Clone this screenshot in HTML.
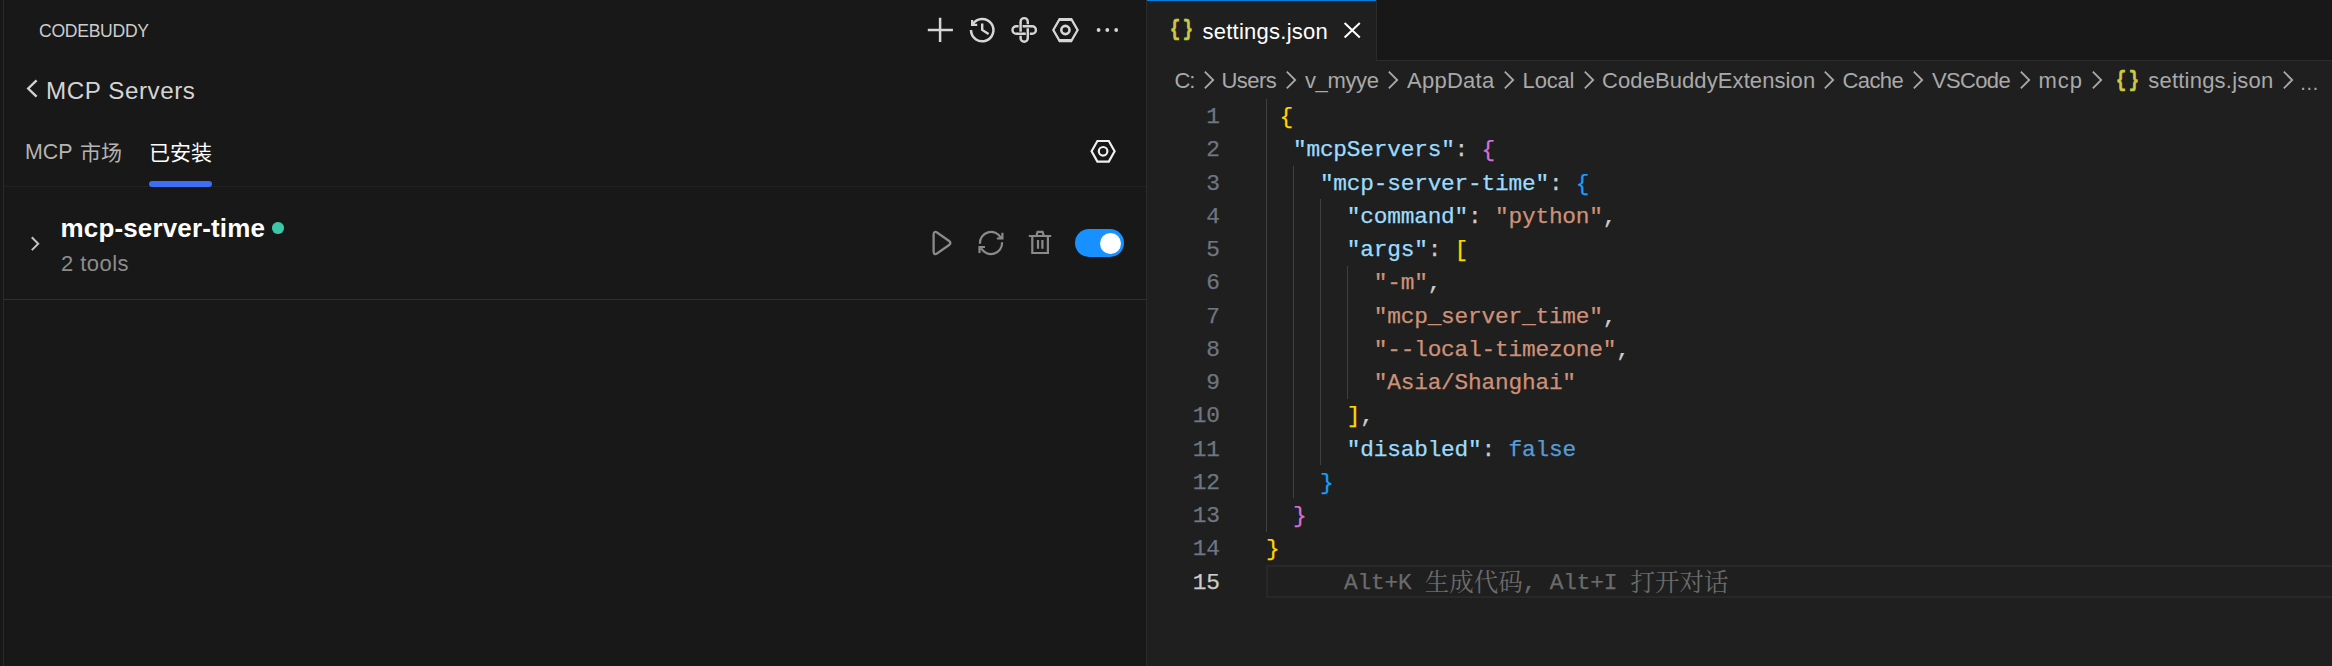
<!DOCTYPE html>
<html lang="zh-CN">
<head>
<meta charset="utf-8">
<title>CodeBuddy MCP Servers - settings.json</title>
<style>
html,body{margin:0;padding:0;background:#181818;}
body{width:2332px;height:666px;position:relative;overflow:hidden;font-family:"Liberation Sans","Noto Sans CJK SC",sans-serif;color:#cccccc;}
.abs{position:absolute;}
.t{position:absolute;white-space:pre;line-height:1;margin:0;padding:0;}
svg{position:absolute;overflow:visible;}
/* ---------- side panel ---------- */
#side{position:absolute;left:0;top:0;width:1146px;height:666px;background:#181818;}
#side .vline{position:absolute;left:3px;top:0;width:1px;height:666px;background:#2b2b2b;}
#side .h1{position:absolute;left:4px;top:186px;width:1142px;height:1px;background:#212121;}
#side .h2{position:absolute;left:4px;top:299px;width:1142px;height:1px;background:#303030;}
#divider{position:absolute;left:1146px;top:0;width:1px;height:666px;background:#2b2b2b;}
.sans{font-family:"Liberation Sans","Noto Sans CJK SC",sans-serif;}
/* ---------- editor ---------- */
#editor{position:absolute;left:1147px;top:0;width:1185px;height:666px;background:#1f1f1f;}
#tabbar{position:absolute;left:0;top:0;width:1185px;height:60px;background:#181818;border-bottom:1px solid #2b2b2b;}
#tab{position:absolute;left:0;top:0;width:229px;height:61px;background:#1f1f1f;border-right:1px solid #2b2b2b;}
#tab .top{position:absolute;left:0;top:0;width:229px;height:1px;background:#0080e0;}
.mono{font-family:"Liberation Mono","Noto Serif CJK SC",monospace;}
#code{position:absolute;left:0;top:0;}
.ln{position:absolute;left:0;width:1219.7px;text-align:right;color:#6e7681;white-space:pre;}
.cl{position:absolute;left:1266px;white-space:pre;color:#cccccc;}
.k{color:#9cdcfe}.s{color:#ce9178}.b1{color:#ffd700}.b2{color:#da70d6}.b3{color:#179fff}.kw{color:#569cd6}
.ln,.cl{font-size:22.8px;letter-spacing:-0.21px;line-height:33.25px;height:33.25px;margin-top:1.8px;-webkit-text-stroke:0.25px currentColor;}
.ln.act{color:#cccccc;}
.ghost{color:#6b6b6b;}
.cj{font-family:"Noto Serif CJK SC",serif;font-size:24.5px;line-height:0;letter-spacing:0;-webkit-text-stroke:0;position:relative;top:2.4px;}
.guide{position:absolute;width:1px;background:#404040;}
</style>
</head>
<body>
<div id="side">
  <div class="vline"></div>
  <div class="h1"></div>
  <div class="h2"></div>

  <div class="t" id="t_title" style="left:39px;top:23px;font-size:17.6px;letter-spacing:-0.3px;color:#cccccc;">CODEBUDDY</div>
  <div class="t" id="t_mcp" style="left:46px;top:78.6px;font-size:24.2px;letter-spacing:0.55px;color:#d4d4d4;">MCP Servers</div>
  <div class="t" id="t_market" style="left:25px;top:141.9px;font-size:21px;color:#b4b4b4;"><span style="font-size:21.4px;line-height:0;position:relative;top:-1.2px;margin-right:2px;">MCP </span>市场</div>
  <div class="t" id="t_inst" style="left:149px;top:142px;font-size:21px;color:#ffffff;">已安装</div>
  <div class="abs" id="underline" style="left:149px;top:181px;width:63px;height:6px;border-radius:3px;background:#3c6ff5;"></div>
  <div class="t" id="t_name" style="left:60.5px;top:215px;font-size:26px;letter-spacing:0.15px;font-weight:bold;color:#ffffff;">mcp-server-time</div>
  <div class="abs" id="dot" style="left:272px;top:222px;width:11.5px;height:11.5px;border-radius:50%;background:#3cc8a8;"></div>
  <div class="t" id="t_tools" style="left:61px;top:253.1px;font-size:22px;letter-spacing:0.45px;color:#8c8c8c;">2 tools</div>

  <!-- header action icons -->
  <svg id="i_plus" style="left:926px;top:16px" width="28" height="28" viewBox="926 16 28 28"><path d="M927.8 30.1H952.9M940.1 17.8V42.1" stroke="#d6d6d6" stroke-width="2.5" fill="none"/></svg>
  <svg id="i_hist" style="left:968px;top:16px" width="28" height="28" viewBox="968 16 28 28"><path d="M972.91 23.84A11.2 11.2 0 1 1 971 30.1" stroke="#d6d6d6" stroke-width="2.5" fill="none"/><path d="M971 19.9H973.2V23.8H977.2V26H971Z" fill="#d6d6d6"/><path d="M971.5 20.5L976.8 25.6H971.5Z" fill="#d6d6d6" opacity="0.65"/><path d="M982.2 23.4V29.9L988.6 34" stroke="#d6d6d6" stroke-width="2.4" fill="none"/></svg>
  <svg id="i_knot" style="left:1010px;top:16px" width="28" height="28" viewBox="1010 16 28 28"><g fill="none" stroke-width="2.4" stroke="#d6d6d6"><rect x="1012.5" y="26.2" width="23.4" height="7.5" rx="3.75"/><rect x="1020.6" y="18.1" width="7.2" height="23.7" rx="3.6"/><path d="M1020.6 23.2V29.2M1027.8 30.7V36.7M1024.8 26.2H1030.8M1017.6 33.7H1023.6" stroke="#181818" stroke-width="4"/><path d="M1020.6 22.6V29.8M1027.8 30.1V37.3M1024.2 26.2H1031.4M1017 33.7H1024.2"/></g></svg>
  <svg id="i_hex" style="left:1051px;top:16px" width="29" height="28" viewBox="1051 16 29 28"><path d="M1053.3 30L1059.4 19.4H1071.5L1077.6 30L1071.5 40.6H1059.4Z" stroke="#d6d6d6" stroke-width="2.3" fill="none" stroke-linejoin="miter"/><path d="M1058.9 19.45H1072M1058.9 40.6H1072" stroke="#d6d6d6" stroke-width="3.1" fill="none"/><circle cx="1065.4" cy="30" r="4.1" stroke="#d6d6d6" stroke-width="2.6" fill="none"/></svg>
  <svg id="i_dots" style="left:1095px;top:26px" width="26" height="8" viewBox="1095 26 26 8"><circle cx="1098.6" cy="30" r="1.9" fill="#d6d6d6"/><circle cx="1107.3" cy="30" r="1.9" fill="#d6d6d6"/><circle cx="1116.2" cy="30" r="1.9" fill="#d6d6d6"/></svg>
  <!-- back chevron -->
  <svg id="i_back" style="left:24px;top:76px" width="16" height="24" viewBox="24 76 16 24"><path d="M36.6 80.3L28.2 88.5L36.6 96.7" stroke="#d0d0d0" stroke-width="2.4" fill="none"/></svg>
  <!-- settings hex (tabs row) -->
  <svg id="i_hex2" style="left:1089px;top:138px" width="29" height="28" viewBox="1089 138 29 28"><path d="M1091.6 151.3L1097.4 141H1108.8L1114.6 151.3L1108.8 161.6H1097.4Z" stroke="#f0f0f0" stroke-width="2.2" fill="none"/><circle cx="1103.1" cy="151.3" r="4.3" stroke="#f0f0f0" stroke-width="2.2" fill="none"/></svg>
  <!-- row chevron -->
  <svg id="i_chev" style="left:28px;top:234px" width="14" height="20" viewBox="28 234 14 20"><path d="M31.8 237.3L38.2 243.7L31.8 250.1" stroke="#c4c4c4" stroke-width="2" fill="none"/></svg>
  <!-- row action icons -->
  <svg id="i_play" style="left:930px;top:229px" width="24" height="28" viewBox="930 229 24 28"><path d="M933.6 235.1Q933.6 230.1 937.7 232.97L948.77 240.71Q952.05 243 948.77 245.29L937.7 253.03Q933.6 255.9 933.6 250.9Z" stroke="#8a8a8a" stroke-width="2.3" fill="none" stroke-linejoin="round"/></svg>
  <svg id="i_refresh" style="left:977px;top:229px" width="28" height="28" viewBox="977 229 28 28"><path d="M979.93 243.77A11.1 11.1 0 0 1 1000.80 237.79M1002.07 242.23A11.1 11.1 0 0 1 981.20 248.21M1002.4 232.8V238.5H996.9M979.5 252.9V247H985" stroke="#8a8a8a" stroke-width="2.2" fill="none"/></svg>
  <svg id="i_trash" style="left:1027px;top:228px" width="26" height="28" viewBox="1027 228 26 28"><path d="M1028.8 236H1051.2M1036.4 236L1037.6 231.8H1042.6L1043.8 236M1032.3 236V253H1047.9V236M1038 240V248.7M1042.4 240V248.7" stroke="#8a8a8a" stroke-width="2.2" fill="none"/></svg>
  <!-- toggle -->
  <div class="abs" id="toggle" style="left:1075px;top:229px;width:49.4px;height:28.2px;border-radius:14.1px;background:#1890ff;"></div>
  <div class="abs" id="knob" style="left:1099.9px;top:232.9px;width:21.2px;height:21.2px;border-radius:50%;background:#ffffff;"></div>
</div>
<div id="divider"></div>
<div id="editor">
  <div id="tabbar"></div>
  <div id="tab"><div class="top"></div></div>
</div>
<div id="overlay">
  <!-- tab -->
  <div class="t" id="tab_icon" style="left:1170.4px;top:17.6px;font-size:22.4px;font-weight:bold;letter-spacing:3.4px;color:#cbcb41;font-family:'Liberation Mono',monospace;-webkit-text-stroke:0.7px #cbcb41;transform:scaleX(0.76);transform-origin:0 0;">{}</div>
  <div class="t" id="tab_label" style="left:1202.5px;top:20.7px;font-size:22px;letter-spacing:0.25px;color:#ffffff;">settings.json</div>
  <svg id="tab_close" style="left:1342px;top:20px" width="20" height="20" viewBox="1342 20 20 20"><path d="M1344.6 23L1359.8 37.4M1359.8 23L1344.6 37.4" stroke="#ffffff" stroke-width="2" fill="none"/></svg>
  <!-- breadcrumbs -->
  <div class="t bc" id="bc0" style="left:1174.4px;top:70.4px;font-size:22px;color:#a9a9a9;letter-spacing:-1.10px;">C:</div>
  <div class="t bc" id="bc1" style="left:1221.4px;top:70.4px;font-size:22px;color:#a9a9a9;letter-spacing:-0.50px;">Users</div>
  <div class="t bc" id="bc2" style="left:1305.0px;top:70.4px;font-size:22px;color:#a9a9a9;letter-spacing:-0.38px;">v_myye</div>
  <div class="t bc" id="bc3" style="left:1407.0px;top:70.4px;font-size:22px;color:#a9a9a9;letter-spacing:0.25px;">AppData</div>
  <div class="t bc" id="bc4" style="left:1522.6px;top:70.4px;font-size:22px;color:#a9a9a9;letter-spacing:-0.20px;">Local</div>
  <div class="t bc" id="bc5" style="left:1602.0px;top:70.4px;font-size:22px;color:#a9a9a9;letter-spacing:0.09px;">CodeBuddyExtension</div>
  <div class="t bc" id="bc6" style="left:1842.6px;top:70.4px;font-size:22px;color:#a9a9a9;letter-spacing:-0.64px;">Cache</div>
  <div class="t bc" id="bc7" style="left:1932.0px;top:70.4px;font-size:22px;color:#a9a9a9;letter-spacing:-0.66px;">VSCode</div>
  <div class="t bc" id="bc8" style="left:2038.4px;top:70.4px;font-size:22px;color:#a9a9a9;letter-spacing:1.05px;">mcp</div>
  <div class="t bc" id="bc9" style="left:2148.2px;top:70.4px;font-size:22px;color:#a9a9a9;letter-spacing:0.23px;">settings.json</div>
  <svg id="bch0" style="left:1201.6px;top:70px" width="14" height="20" viewBox="-7 -10 14 20"><path d="M-4.2 -8.3L4.2 0L-4.2 8.3" stroke="#a9a9a9" stroke-width="1.8" fill="none"/></svg>
  <svg id="bch1" style="left:1284.0px;top:70px" width="14" height="20" viewBox="-7 -10 14 20"><path d="M-4.2 -8.3L4.2 0L-4.2 8.3" stroke="#a9a9a9" stroke-width="1.8" fill="none"/></svg>
  <svg id="bch2" style="left:1386.0px;top:70px" width="14" height="20" viewBox="-7 -10 14 20"><path d="M-4.2 -8.3L4.2 0L-4.2 8.3" stroke="#a9a9a9" stroke-width="1.8" fill="none"/></svg>
  <svg id="bch3" style="left:1502.0px;top:70px" width="14" height="20" viewBox="-7 -10 14 20"><path d="M-4.2 -8.3L4.2 0L-4.2 8.3" stroke="#a9a9a9" stroke-width="1.8" fill="none"/></svg>
  <svg id="bch4" style="left:1582.0px;top:70px" width="14" height="20" viewBox="-7 -10 14 20"><path d="M-4.2 -8.3L4.2 0L-4.2 8.3" stroke="#a9a9a9" stroke-width="1.8" fill="none"/></svg>
  <svg id="bch5" style="left:1822.0px;top:70px" width="14" height="20" viewBox="-7 -10 14 20"><path d="M-4.2 -8.3L4.2 0L-4.2 8.3" stroke="#a9a9a9" stroke-width="1.8" fill="none"/></svg>
  <svg id="bch6" style="left:1911.0px;top:70px" width="14" height="20" viewBox="-7 -10 14 20"><path d="M-4.2 -8.3L4.2 0L-4.2 8.3" stroke="#a9a9a9" stroke-width="1.8" fill="none"/></svg>
  <svg id="bch7" style="left:2018.0px;top:70px" width="14" height="20" viewBox="-7 -10 14 20"><path d="M-4.2 -8.3L4.2 0L-4.2 8.3" stroke="#a9a9a9" stroke-width="1.8" fill="none"/></svg>
  <svg id="bch8" style="left:2090.0px;top:70px" width="14" height="20" viewBox="-7 -10 14 20"><path d="M-4.2 -8.3L4.2 0L-4.2 8.3" stroke="#a9a9a9" stroke-width="1.8" fill="none"/></svg>
  <svg id="bch9" style="left:2281.0px;top:70px" width="14" height="20" viewBox="-7 -10 14 20"><path d="M-4.2 -8.3L4.2 0L-4.2 8.3" stroke="#a9a9a9" stroke-width="1.8" fill="none"/></svg>
  <div class="t" id="bc_icon" style="left:2116.4px;top:68.6px;font-size:22.4px;font-weight:bold;letter-spacing:3.4px;color:#cbcb41;font-family:'Liberation Mono',monospace;-webkit-text-stroke:0.7px #cbcb41;transform:scaleX(0.76);transform-origin:0 0;">{}</div>
  <div class="t" id="bc_more" style="left:2299.5px;top:74px;font-size:19.5px;color:#a9a9a9;">…</div>
  <!-- code editor -->
  <div class="abs" id="curline" style="left:1266px;top:565px;width:1070px;height:29px;border:2px solid #282828;"></div>
  <div class="guide" id="g0" style="left:1266px;top:99.40px;height:432.25px;"></div>
  <div class="guide" id="g1" style="left:1293px;top:165.90px;height:332.50px;"></div>
  <div class="guide" id="g2" style="left:1320px;top:199.15px;height:266.00px;"></div>
  <div class="guide" id="g3" style="left:1347px;top:265.65px;height:133.00px;"></div>
  <div class="ln mono" id="ln1" style="top:99.40px;">1</div>
  <div class="ln mono" id="ln2" style="top:132.65px;">2</div>
  <div class="ln mono" id="ln3" style="top:165.90px;">3</div>
  <div class="ln mono" id="ln4" style="top:199.15px;">4</div>
  <div class="ln mono" id="ln5" style="top:232.40px;">5</div>
  <div class="ln mono" id="ln6" style="top:265.65px;">6</div>
  <div class="ln mono" id="ln7" style="top:298.90px;">7</div>
  <div class="ln mono" id="ln8" style="top:332.15px;">8</div>
  <div class="ln mono" id="ln9" style="top:365.40px;">9</div>
  <div class="ln mono" id="ln10" style="top:398.65px;">10</div>
  <div class="ln mono" id="ln11" style="top:431.90px;">11</div>
  <div class="ln mono" id="ln12" style="top:465.15px;">12</div>
  <div class="ln mono" id="ln13" style="top:498.40px;">13</div>
  <div class="ln mono" id="ln14" style="top:531.65px;">14</div>
  <div class="ln mono act" id="ln15" style="top:564.90px;">15</div>
  <div class="cl mono" id="cl1" style="top:99.40px;"> <span class="b1">{</span></div>
  <div class="cl mono" id="cl2" style="top:132.65px;">  <span class="k">"mcpServers"</span>: <span class="b2">{</span></div>
  <div class="cl mono" id="cl3" style="top:165.90px;">    <span class="k">"mcp-server-time"</span>: <span class="b3">{</span></div>
  <div class="cl mono" id="cl4" style="top:199.15px;">      <span class="k">"command"</span>: <span class="s">"python"</span>,</div>
  <div class="cl mono" id="cl5" style="top:232.40px;">      <span class="k">"args"</span>: <span class="b1">[</span></div>
  <div class="cl mono" id="cl6" style="top:265.65px;">        <span class="s">"-m"</span>,</div>
  <div class="cl mono" id="cl7" style="top:298.90px;">        <span class="s">"mcp_server_time"</span>,</div>
  <div class="cl mono" id="cl8" style="top:332.15px;">        <span class="s">"--local-timezone"</span>,</div>
  <div class="cl mono" id="cl9" style="top:365.40px;">        <span class="s">"Asia/Shanghai"</span></div>
  <div class="cl mono" id="cl10" style="top:398.65px;">      <span class="b1">]</span>,</div>
  <div class="cl mono" id="cl11" style="top:431.90px;">      <span class="k">"disabled"</span>: <span class="kw">false</span></div>
  <div class="cl mono" id="cl12" style="top:465.15px;">    <span class="b3">}</span></div>
  <div class="cl mono" id="cl13" style="top:498.40px;">  <span class="b2">}</span></div>
  <div class="cl mono" id="cl14" style="top:531.65px;"><span class="b1">}</span></div>
  <div class="cl mono ghost" id="cl15" style="left:1344px;top:564.90px;">Alt+K <span class="cj">生成代码</span>, Alt+I <span class="cj">打开对话</span></div>
</div>
</body>
</html>
